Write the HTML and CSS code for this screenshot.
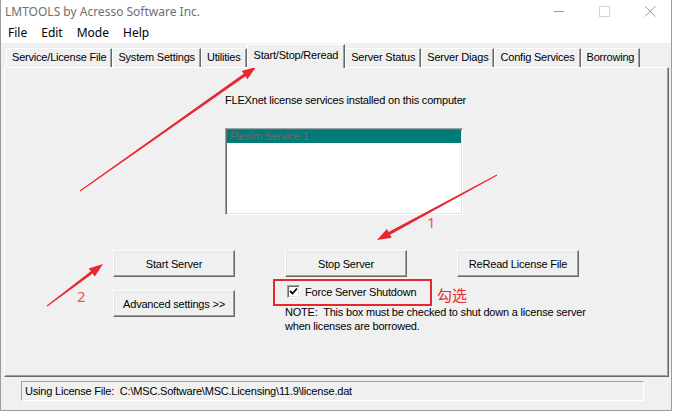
FILE: index.html
```html
<!DOCTYPE html>
<html lang="en">

<head>
  <meta charset="UTF-8">
  <title>LMTOOLS</title>
  <link rel="stylesheet" href="styles.css">
</head>

<body>
  <div class="window">
    <div class="titlebar">
      <span class="title">LMTOOLS by Acresso Software Inc.</span>
      <svg class="controls" width="130" height="22" viewBox="0 0 130 22">
        <path d="M13 11.5h10" stroke="#9a9a9a" stroke-width="1" />
        <rect x="58.5" y="6.5" width="10" height="10" fill="none" stroke="#d4d4d4" />
        <path d="M104 6l10.5 10.5M114.5 6L104 16.5" stroke="#9a9a9a" stroke-width="1" />
      </svg>
    </div>
    <ul class="menubar">
      <li>File</li>
      <li>Edit</li>
      <li>Mode</li>
      <li>Help</li>
    </ul>
    <div class="client">
      <ul class="tabs">
        <li class="tab">Service/License File</li>
        <li class="tab">System Settings</li>
        <li class="tab">Utilities</li>
        <li class="tab active">Start/Stop/Reread</li>
        <li class="tab">Server Status</li>
        <li class="tab">Server Diags</li>
        <li class="tab">Config Services</li>
        <li class="tab">Borrowing</li>
      </ul>
      <div class="panel">
        <p class="caption">FLEXnet license services installed on this computer</p>
        <div class="listbox">
          <div class="item selected">FlexIm Service 1</div>
        </div>
        <div class="actions">
          <button class="btn">Start Server</button>
          <button class="btn">Stop Server</button>
          <button class="btn">ReRead License File</button>
          <button class="btn advanced">Advanced settings &gt;&gt;</button>
          <div class="force">
            <label class="check">
              <span class="box">
                <svg width="9" height="9" viewBox="0 0 9 9"><path d="M1 4l2.5 2.5L8 1.5" fill="none" stroke="#000" stroke-width="1.8" /></svg>
              </span>
              Force Server Shutdown
            </label>
            <p class="note">NOTE:&nbsp; This box must be checked to shut down a license server<br>when licenses are borrowed.</p>
          </div>
        </div>
      </div>
      <div class="status">Using License File:&nbsp; C:\MSC.Software\MSC.Licensing\11.9\license.dat</div>
    </div>
  </div>

  <!-- 红色标注 -->
  <svg class="marks" width="673" height="414" viewBox="0 0 673 414">
    <g fill="#e8262d">
      <polygon points="79.7,190.6 243.7,73.8 241.7,71 256,67 247.4,79.2 245.4,76.3 80.3,191.4" />
      <polygon points="496.8,174.6 388.6,232 386.9,228.9 377,240 391.7,237.7 390,234.7 497.2,175.4" />
      <polygon points="46.7,305.6 90.9,271.2 88.8,268.4 103,264 94.8,276.4 92.7,273.6 47.3,306.4" />
    </g>
    <rect x="274" y="280" width="157" height="25" fill="none" stroke="#e8262d" stroke-width="2" />
    <text x="427" y="228" class="num">1</text>
    <text x="77" y="302" class="num">2</text>
    <text x="437" y="301" class="tick">勾选</text>
  </svg>
</body>

</html>
```

FILE: styles.css
```css
* {
  padding: 0;
  margin: 0;
  list-style: none;
  box-sizing: border-box;
}

body {
  width: 673px;
  height: 414px;
  background-color: #fff;
  font-family: "Liberation Sans", Arial, sans-serif;
  font-size: 11px;
  color: #000;
  position: relative;
  overflow: hidden;
}

.window {
  width: 672px;
  height: 411px;
  border: 1px solid #9c9c9c;
  border-top: 0;
  background-color: #f0f0f0;
  display: flex;
  flex-direction: column;
}

.titlebar {
  height: 22px;
  background-color: #fff;
  display: flex;
  align-items: center;
  padding-left: 4px;
}

.title {
  font-family: "Noto Sans", sans-serif;
  font-size: 12px;
  color: #707070;
}

.controls {
  margin-left: auto;
  display: block;
}

.menubar {
  height: 21px;
  background-color: #fff;
  display: flex;
  align-items: center;
  font-family: "Noto Sans", sans-serif;
  font-size: 12px;
}

.menubar li {
  padding: 0 7px;
}

.client {
  flex: 1;
  padding: 2px 2px 0 3px;
  display: flex;
  flex-direction: column;
  letter-spacing: -0.2px;
}

/* 选项卡 */
.tabs {
  display: flex;
  align-items: flex-end;
  height: 23px;
  margin-left: 2px;
  position: relative;
  z-index: 1;
  margin-bottom: -1px;
}

.tab {
  height: 19px;
  line-height: 17px;
  padding: 0 5px;
  border-top: 1px solid #fff;
  border-left: 1px solid #fff;
  border-right: 1px solid #696969;
  box-shadow: inset -1px 0 #a0a0a0;
  background-color: #f0f0f0;
  white-space: nowrap;
  margin-bottom: 1px;
}

.tab.active {
  height: 24px;
  line-height: 20px;
  padding: 0 6px;
  margin-bottom: 0;
}

.panel {
  height: 310px;
  border-top: 1px solid #fff;
  border-left: 1px solid #fff;
  border-right: 1px solid #696969;
  border-bottom: 1px solid #696969;
  box-shadow: inset -1px -1px #a0a0a0;
  padding-top: 26px;
}

.caption {
  margin-left: 220px;
  line-height: 13px;
}

.listbox {
  width: 238px;
  height: 87px;
  margin: 21px 0 0 220px;
  background-color: #fff;
  border-top: 1px solid #a0a0a0;
  border-left: 1px solid #a0a0a0;
  border-right: 1px solid #fff;
  border-bottom: 1px solid #fff;
  box-shadow: inset 1px 1px #696969, inset -1px -1px #e3e3e3;
  padding: 1px;
}

.item {
  height: 13px;
  line-height: 13px;
  padding-left: 3px;
}

.item.selected {
  background-color: #007b78;
  color: #6b6b6b;
}

.actions {
  display: grid;
  grid-template-columns: 122px 122px 122px;
  column-gap: 50px;
  row-gap: 8px;
  margin: 35px 0 0 108px;
}

.btn {
  height: 27px;
  font-family: "Liberation Sans", Arial, sans-serif;
  font-size: 11px;
  letter-spacing: -0.2px;
  color: #000;
  background-color: #f0f0f0;
  border-top: 1px solid #fff;
  border-left: 1px solid #fff;
  border-right: 1px solid #696969;
  border-bottom: 1px solid #696969;
  box-shadow: inset -1px -1px #a0a0a0, inset 1px 1px #e3e3e3;
}

.advanced {
  margin-top: 5px;
}

.force {
  grid-column: 2 / 4;
}

.check {
  display: flex;
  align-items: center;
  height: 13px;
  margin-left: 2px;
  gap: 5px;
}

.box {
  width: 13px;
  height: 13px;
  background-color: #fff;
  border-top: 1px solid #a0a0a0;
  border-left: 1px solid #a0a0a0;
  border-right: 1px solid #fff;
  border-bottom: 1px solid #fff;
  box-shadow: inset 1px 1px #696969, inset -1px -1px #e3e3e3;
  display: flex;
  align-items: center;
  justify-content: center;
}

.box svg {
  display: block;
}

.note {
  margin-top: 7px;
  line-height: 14px;
  white-space: nowrap;
}

.status {
  width: 623px;
  height: 20px;
  margin: 4px 0 0 17px;
  line-height: 18px;
  padding-left: 3px;
  border-top: 1px solid #a0a0a0;
  border-left: 1px solid #a0a0a0;
  border-right: 1px solid #fff;
  border-bottom: 1px solid #fff;
  white-space: nowrap;
}

/* 标注层 */
.marks {
  position: absolute;
  left: 0;
  top: 0;
  pointer-events: none;
}

.num {
  font-family: "Noto Sans", sans-serif;
  font-size: 15px;
  fill: #f0505a;
}

.tick {
  font-family: "Noto Sans CJK SC", sans-serif;
  font-size: 15px;
  fill: #e8262d;
}
```
